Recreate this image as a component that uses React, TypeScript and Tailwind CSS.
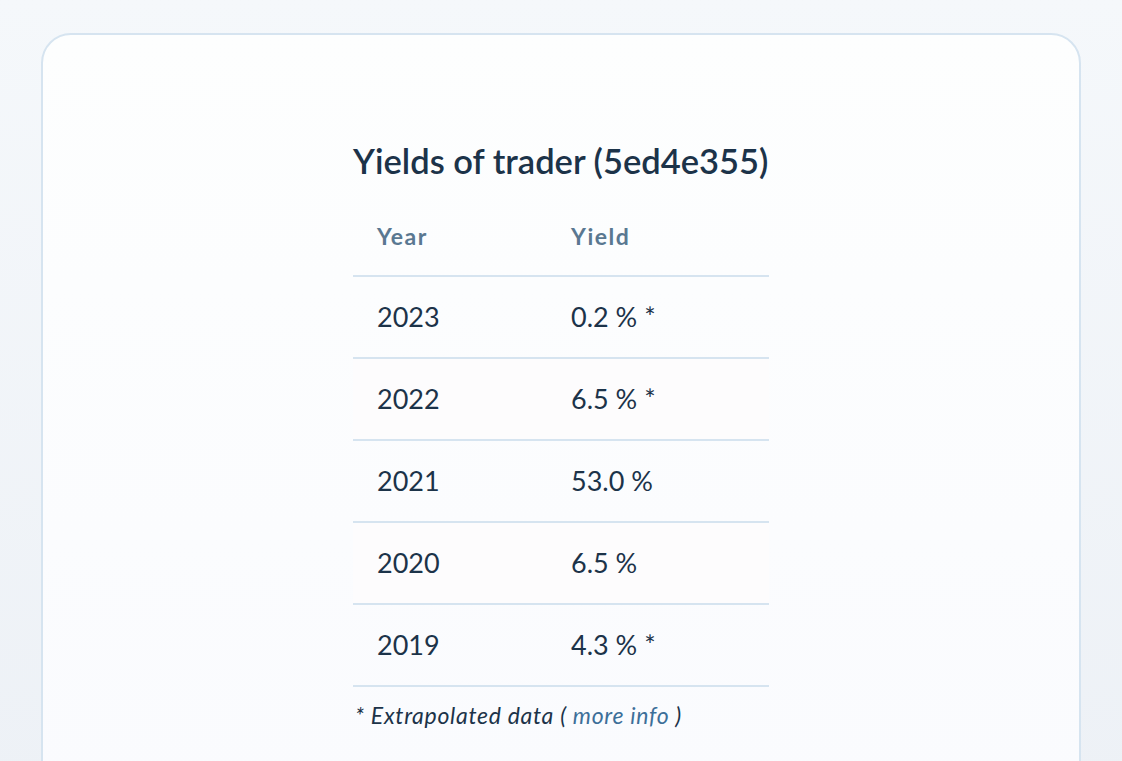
const rows = [
  { year: "2023", yieldValue: "0.2 % *", striped: false },
  { year: "2022", yieldValue: "6.5 % *", striped: true },
  { year: "2021", yieldValue: "53.0 %", striped: false },
  { year: "2020", yieldValue: "6.5 %", striped: true },
  { year: "2019", yieldValue: "4.3 % *", striped: false },
];

export default function App() {
  return (
    <div
      className="min-h-[761px] overflow-hidden bg-gradient-to-b from-[#f5f8fb] to-[#edf1f6] px-[41px] pt-[33px] text-[#1c3349]"
      style={{ fontFamily: "Lato, 'Noto Sans', sans-serif" }}
    >
      <div className="h-[760px] rounded-t-[30px] border-2 border-[#d6e4f0] bg-gradient-to-b from-[#fdfefe] to-[#fafbfe]">
        <div className="flex justify-center pt-[103px]">
          <div className="w-[416px]">
            <h1 className="whitespace-nowrap text-[34.5px] font-semibold leading-[46px]">
              Yields of trader (5ed4e355)
            </h1>

            <table className="mt-[13px] w-full border-collapse text-left">
              <thead>
                <tr className="border-b-2 border-[#d6e4f0]">
                  <th className="h-[79px] w-[218px] pl-6 text-[23px] font-bold tracking-[1.5px] text-[#5a7891]">Year</th>
                  <th className="h-[79px] text-[23px] font-bold tracking-[1.5px] text-[#5a7891]">Yield</th>
                </tr>
              </thead>
              <tbody>
                {rows.map((row) => (
                  <tr
                    key={row.year}
                    className={row.striped ? "border-b-2 border-[#d6e4f0] bg-[#fdfcfd]" : "border-b-2 border-[#d6e4f0]"}
                  >
                    <td className="h-[82px] pl-6 text-[27px]">{row.year}</td>
                    <td className="h-[82px] text-[27px]">{row.yieldValue}</td>
                  </tr>
                ))}
              </tbody>
            </table>

            <p className="mt-[11px] whitespace-nowrap pl-[2px] text-[23px] italic tracking-[0.7px]">
              * Extrapolated data ( <a href="#" className="text-[#3d6f99]">more info</a> )
            </p>
          </div>
        </div>
      </div>
    </div>
  );
}
